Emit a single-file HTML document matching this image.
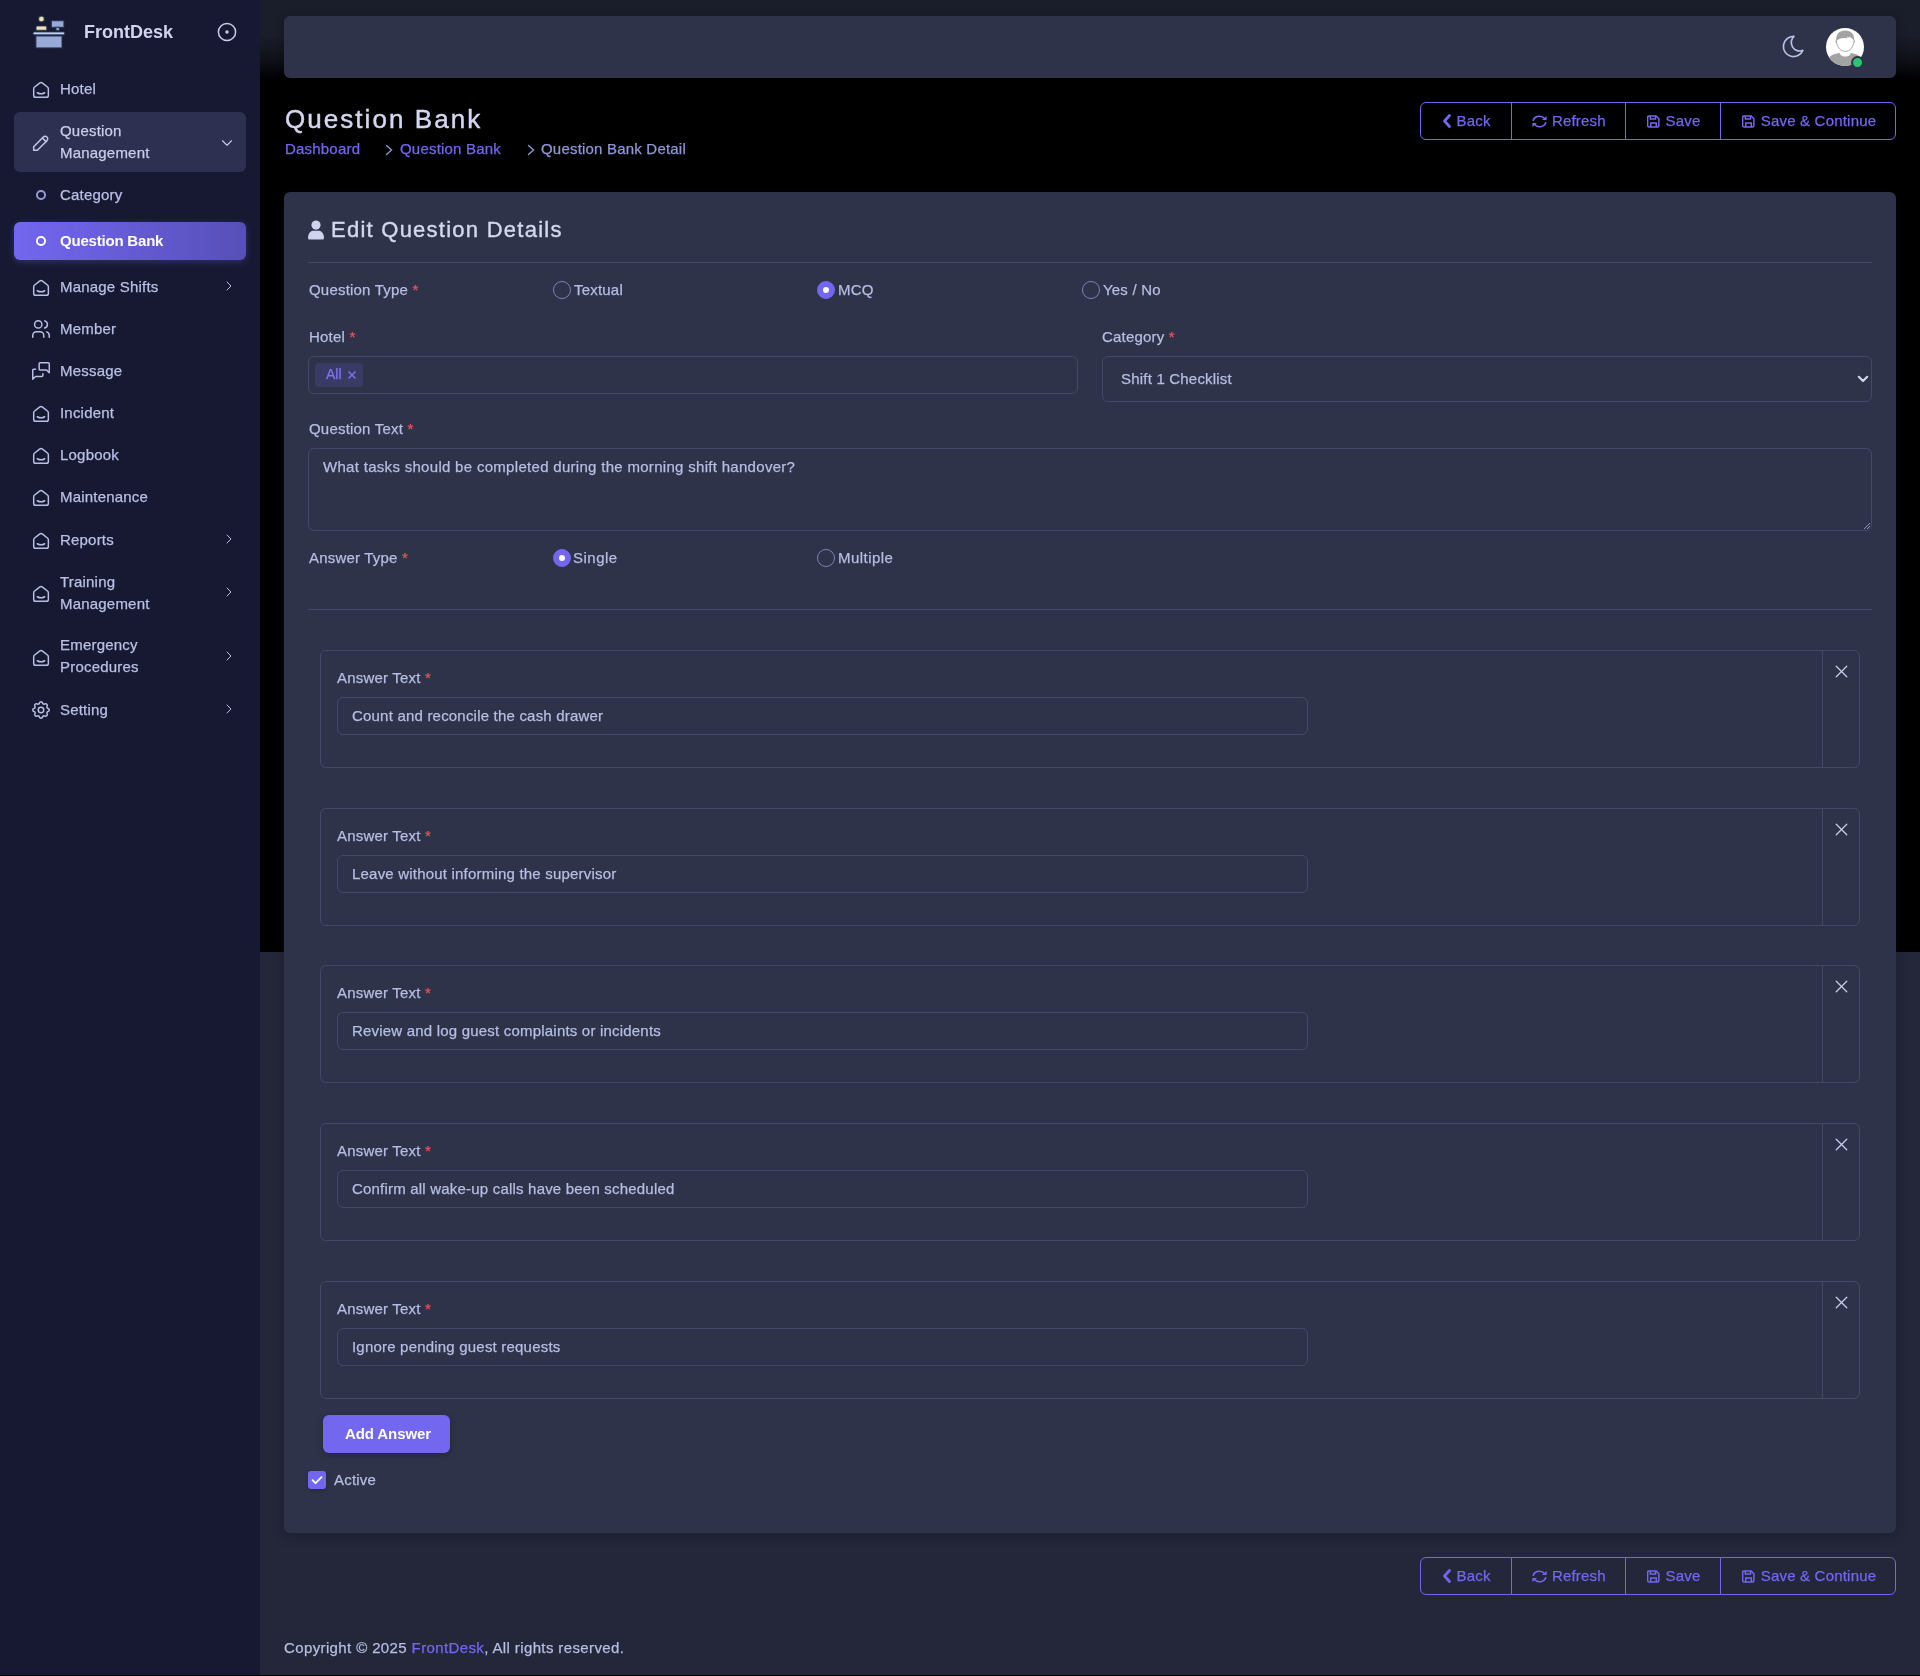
<!DOCTYPE html>
<html><head><meta charset="utf-8">
<style>
*{box-sizing:border-box;margin:0;padding:0}
html,body{width:1920px;height:1676px;overflow:hidden;background:#25293c}
.txt,.lbl,.mi,.ans,.btng,.abs{will-change:transform}
body{position:relative;font-family:"Liberation Sans",sans-serif;font-size:15px;color:#b6bee3;letter-spacing:0.2px;-webkit-text-stroke:0.25px currentColor}
.abs{position:absolute}
svg{display:block}
/* backgrounds */
#blk{left:260px;top:0;width:1660px;height:952px;background:#000}
#low{left:260px;top:952px;width:1660px;height:723px;background:#242739}
#botline{left:0;top:1675px;width:1920px;height:1px;background:#000}
#topgrad{left:260px;top:0;width:1660px;height:80px;background:linear-gradient(180deg,rgba(37,41,60,.7) 44%,rgba(37,41,60,.43) 73%,rgba(37,41,60,0))}
/* sidebar */
#side{left:0;top:0;width:260px;height:1675px;background:#171933}
.mi{position:absolute;left:60px;white-space:nowrap;line-height:22px;color:#b9c0e4}
.ic{position:absolute;left:30px;stroke:#b9c0e4;fill:none;stroke-width:1.6;stroke-linecap:round;stroke-linejoin:round}
.chev{position:absolute;left:222px;stroke:#b9c0e4;fill:none;stroke-width:1.5;stroke-linecap:round;stroke-linejoin:round}
/* navbar */
#nav{left:284px;top:16px;width:1612px;height:62px;background:#2f3349;border-radius:6px;box-shadow:0 2px 10px rgba(0,0,0,.25)}
.btng{position:absolute;left:1420px;width:476px;height:38px;border:1px solid #7367f0;border-radius:6px;color:#7367f0}
.btng .d{position:absolute;top:-1px;height:38px;width:1px;background:#7367f0}
.btng span{position:absolute;top:0;line-height:36px;white-space:nowrap}
.btng svg{position:absolute}
/* card */
#card{left:284px;top:192px;width:1612px;height:1341px;background:#2f3349;border-radius:6px;box-shadow:0 3px 12px rgba(15,20,34,.35)}
.lbl{position:absolute;line-height:20px;white-space:nowrap;color:#b6bee3}
.req{color:#ea5455}
.inp{position:absolute;border:1px solid #434968;border-radius:6px}
.txt{position:absolute;white-space:nowrap;line-height:20px;color:#b6bee3}
.hr{position:absolute;height:1px;background:#434968}
.radio{position:absolute;width:18px;height:18px;border-radius:50%;border:1px solid #7b80b8}
.radio.on{background:#7367f0;border-color:#7367f0}
.radio.on:after{content:"";position:absolute;left:5px;top:5px;width:6px;height:6px;border-radius:50%;background:#fff}
.ans{position:absolute;left:320px;width:1540px;height:118px;border:1px solid #434968;border-radius:6px}
.ans .dv{position:absolute;left:1501px;top:0;width:1px;height:116px;background:#434968}
.ans .box{position:absolute;left:16px;top:46px;width:971px;height:38px;border:1px solid #434968;border-radius:6px}
.ans .l{position:absolute;left:16px;top:17px;line-height:20px;white-space:nowrap}
.ans .v{position:absolute;left:31px;top:55px;line-height:20px;white-space:nowrap}
.ans svg{position:absolute;left:1509.5px;top:10px}
</style></head>
<body>
<div id="blk" class="abs"></div>
<div id="low" class="abs"></div>
<div id="topgrad" class="abs"></div>

<!-- SIDEBAR -->
<div id="side" class="abs">
  <!-- logo -->
  <svg class="abs" style="left:25px;top:10px" width="50" height="45" viewBox="0 0 50 45">
    <g stroke="#22324a" stroke-width="1.2" stroke-opacity=".8">
    <circle cx="16.4" cy="9" r="2.9" fill="#f0e0b4"/>
    <rect x="11" y="16" width="10.8" height="4.4" rx="1.2" fill="#f0e0b4"/>
    <rect x="26.4" y="10.7" width="12.5" height="6.7" fill="#98aad8"/>
    <path d="M30.8 17.3 h3.8 l-0.3 3.2 h-3.2z" fill="#98aad8"/>
    <rect x="8" y="21.9" width="31.7" height="2.9" rx="1" fill="#c3d3fb"/>
    <rect x="10.9" y="26" width="26.1" height="11.9" fill="#98aad8"/>
    </g>
  </svg>
  <div class="abs" style="left:84px;top:20.8px;line-height:22px;font-size:18px;font-weight:bold;color:#d0d4ee;letter-spacing:0;-webkit-text-stroke:0">FrontDesk</div>
  <svg class="abs" style="left:215px;top:20.2px;stroke:#c9cdea;fill:none;stroke-width:1.5" width="24" height="24" viewBox="0 0 24 24"><circle cx="12" cy="12" r="8.6"/><circle cx="12" cy="12" r="1" fill="#c9cdea"/></svg>

  <!-- Hotel -->
  <svg class="ic" style="top:79.3px" width="22" height="22" viewBox="0 0 24 24"><path d="M19 8.71l-5.333 -4.148a2.666 2.666 0 0 0 -3.274 0l-5.334 4.148a2.665 2.665 0 0 0 -1.029 2.105v7.2a2 2 0 0 0 2 2h12a2 2 0 0 0 2 -2v-7.2c0 -.823 -.38 -1.6 -1.03 -2.105"/><path d="M16 15c-2.21 1.333 -5.792 1.333 -8 0"/></svg>
  <div class="mi" style="top:77.8px">Hotel</div>

  <!-- Question Management (open) -->
  <div class="abs" style="left:14px;top:112px;width:232px;height:60px;border-radius:6px;background:#2d3050"></div>
  <svg class="ic" style="top:132.3px;stroke:#c3c9ea" width="22" height="22" viewBox="0 0 24 24"><path d="M4 20h4l10.5 -10.5a2.828 2.828 0 1 0 -4 -4l-10.5 10.5v4"/><path d="M13.5 6.5l4 4"/></svg>
  <div class="mi" style="top:119.6px;color:#c9cdea">Question<br>Management</div>
  <svg class="chev" style="left:218.3px;top:133.7px;stroke:#c3c9ea" width="18" height="18" viewBox="0 0 24 24"><path d="M6 9l6 6l6 -6"/></svg>

  <!-- Category -->
  <div class="abs" style="left:36px;top:190.3px;width:9.5px;height:9.5px;border-radius:50%;border:2px solid #939ad4"></div>
  <div class="mi" style="top:183.5px">Category</div>

  <!-- Question Bank active -->
  <div class="abs" style="left:14px;top:222px;width:232px;height:38px;border-radius:6px;background:linear-gradient(270deg,rgba(115,103,240,.7) 0%,#7367f0 100%);box-shadow:0 2px 6px rgba(115,103,240,.3)"></div>
  <div class="abs" style="left:36px;top:236px;width:9.5px;height:9.5px;border-radius:50%;border:2.2px solid #fff"></div>
  <div class="mi" style="top:229.8px;color:#fff;font-weight:bold;letter-spacing:-0.2px;-webkit-text-stroke:0">Question Bank</div>

  <!-- Manage Shifts -->
  <svg class="ic" style="top:277.0px" width="22" height="22" viewBox="0 0 24 24"><path d="M19 8.71l-5.333 -4.148a2.666 2.666 0 0 0 -3.274 0l-5.334 4.148a2.665 2.665 0 0 0 -1.029 2.105v7.2a2 2 0 0 0 2 2h12a2 2 0 0 0 2 -2v-7.2c0 -.823 -.38 -1.6 -1.03 -2.105"/><path d="M16 15c-2.21 1.333 -5.792 1.333 -8 0"/></svg>
  <div class="mi" style="top:275.6px">Manage Shifts</div>
  <svg class="chev" style="left:221.3px;top:278.0px" width="16" height="16" viewBox="0 0 24 24"><path d="M9 6l6 6l-6 6"/></svg>

  <!-- Member -->
  <svg class="ic" style="top:318.0px" width="22" height="22" viewBox="0 0 24 24"><path d="M9 7m-4 0a4 4 0 1 0 8 0a4 4 0 1 0 -8 0"/><path d="M3 21v-2a4 4 0 0 1 4 -4h4a4 4 0 0 1 4 4v2"/><path d="M16 3.13a4 4 0 0 1 0 7.75"/><path d="M21 21v-2a4 4 0 0 0 -3 -3.85"/></svg>
  <div class="mi" style="top:317.6px">Member</div>

  <!-- Message -->
  <svg class="ic" style="top:360.0px" width="22" height="22" viewBox="0 0 24 24"><path d="M21 14l-3 -3h-7a1 1 0 0 1 -1 -1v-6a1 1 0 0 1 1 -1h9a1 1 0 0 1 1 1v10"/><path d="M14 15v2a1 1 0 0 1 -1 1h-7l-3 3v-10a1 1 0 0 1 1 -1h2"/></svg>
  <div class="mi" style="top:359.6px">Message</div>

  <!-- Incident -->
  <svg class="ic" style="top:403.0px" width="22" height="22" viewBox="0 0 24 24"><path d="M19 8.71l-5.333 -4.148a2.666 2.666 0 0 0 -3.274 0l-5.334 4.148a2.665 2.665 0 0 0 -1.029 2.105v7.2a2 2 0 0 0 2 2h12a2 2 0 0 0 2 -2v-7.2c0 -.823 -.38 -1.6 -1.03 -2.105"/><path d="M16 15c-2.21 1.333 -5.792 1.333 -8 0"/></svg>
  <div class="mi" style="top:401.6px">Incident</div>

  <!-- Logbook -->
  <svg class="ic" style="top:445.0px" width="22" height="22" viewBox="0 0 24 24"><path d="M19 8.71l-5.333 -4.148a2.666 2.666 0 0 0 -3.274 0l-5.334 4.148a2.665 2.665 0 0 0 -1.029 2.105v7.2a2 2 0 0 0 2 2h12a2 2 0 0 0 2 -2v-7.2c0 -.823 -.38 -1.6 -1.03 -2.105"/><path d="M16 15c-2.21 1.333 -5.792 1.333 -8 0"/></svg>
  <div class="mi" style="top:443.6px">Logbook</div>

  <!-- Maintenance -->
  <svg class="ic" style="top:487.0px" width="22" height="22" viewBox="0 0 24 24"><path d="M19 8.71l-5.333 -4.148a2.666 2.666 0 0 0 -3.274 0l-5.334 4.148a2.665 2.665 0 0 0 -1.029 2.105v7.2a2 2 0 0 0 2 2h12a2 2 0 0 0 2 -2v-7.2c0 -.823 -.38 -1.6 -1.03 -2.105"/><path d="M16 15c-2.21 1.333 -5.792 1.333 -8 0"/></svg>
  <div class="mi" style="top:485.6px">Maintenance</div>

  <!-- Reports -->
  <svg class="ic" style="top:530.0px" width="22" height="22" viewBox="0 0 24 24"><path d="M19 8.71l-5.333 -4.148a2.666 2.666 0 0 0 -3.274 0l-5.334 4.148a2.665 2.665 0 0 0 -1.029 2.105v7.2a2 2 0 0 0 2 2h12a2 2 0 0 0 2 -2v-7.2c0 -.823 -.38 -1.6 -1.03 -2.105"/><path d="M16 15c-2.21 1.333 -5.792 1.333 -8 0"/></svg>
  <div class="mi" style="top:528.6px">Reports</div>
  <svg class="chev" style="left:221.3px;top:531.0px" width="16" height="16" viewBox="0 0 24 24"><path d="M9 6l6 6l-6 6"/></svg>

  <!-- Training Management -->
  <svg class="ic" style="top:583.0px" width="22" height="22" viewBox="0 0 24 24"><path d="M19 8.71l-5.333 -4.148a2.666 2.666 0 0 0 -3.274 0l-5.334 4.148a2.665 2.665 0 0 0 -1.029 2.105v7.2a2 2 0 0 0 2 2h12a2 2 0 0 0 2 -2v-7.2c0 -.823 -.38 -1.6 -1.03 -2.105"/><path d="M16 15c-2.21 1.333 -5.792 1.333 -8 0"/></svg>
  <div class="mi" style="top:570.5px">Training<br>Management</div>
  <svg class="chev" style="left:221.3px;top:584.0px" width="16" height="16" viewBox="0 0 24 24"><path d="M9 6l6 6l-6 6"/></svg>

  <!-- Emergency Procedures -->
  <svg class="ic" style="top:647.0px" width="22" height="22" viewBox="0 0 24 24"><path d="M19 8.71l-5.333 -4.148a2.666 2.666 0 0 0 -3.274 0l-5.334 4.148a2.665 2.665 0 0 0 -1.029 2.105v7.2a2 2 0 0 0 2 2h12a2 2 0 0 0 2 -2v-7.2c0 -.823 -.38 -1.6 -1.03 -2.105"/><path d="M16 15c-2.21 1.333 -5.792 1.333 -8 0"/></svg>
  <div class="mi" style="top:634.1px">Emergency<br>Procedures</div>
  <svg class="chev" style="left:221.3px;top:648.0px" width="16" height="16" viewBox="0 0 24 24"><path d="M9 6l6 6l-6 6"/></svg>

  <!-- Setting -->
  <svg class="ic" style="top:699.0px" width="22" height="22" viewBox="0 0 24 24"><path d="M10.325 4.317c.426 -1.756 2.924 -1.756 3.35 0a1.724 1.724 0 0 0 2.573 1.066c1.543 -.94 3.31 .826 2.37 2.37a1.724 1.724 0 0 0 1.065 2.572c1.756 .426 1.756 2.924 0 3.35a1.724 1.724 0 0 0 -1.066 2.573c.94 1.543 -.826 3.31 -2.37 2.37a1.724 1.724 0 0 0 -2.572 1.065c-.426 1.756 -2.924 1.756 -3.35 0a1.724 1.724 0 0 0 -2.573 -1.066c-1.543 .94 -3.31 -.826 -2.37 -2.37a1.724 1.724 0 0 0 -1.065 -2.572c-1.756 -.426 -1.756 -2.924 0 -3.35a1.724 1.724 0 0 0 1.066 -2.573c-.94 -1.543 .826 -3.31 2.37 -2.37c1 .608 2.296 .07 2.572 -1.065z"/><path d="M9 12a3 3 0 1 0 6 0a3 3 0 0 0 -6 0"/></svg>
  <div class="mi" style="top:698.5px">Setting</div>
  <svg class="chev" style="left:221.3px;top:701.0px" width="16" height="16" viewBox="0 0 24 24"><path d="M9 6l6 6l-6 6"/></svg>
</div>

<!-- NAVBAR -->
<div id="nav" class="abs"></div>
<svg class="abs" style="left:1779.7px;top:33.4px;fill:none;stroke:#b9c0e6;stroke-width:1.5;stroke-linecap:round;stroke-linejoin:round" width="27" height="27" viewBox="0 0 24 24"><path d="M12 3c.132 0 .263 0 .393 0a7.5 7.5 0 0 0 7.92 12.446a9 9 0 1 1 -8.313 -12.454z"/></svg>
<svg class="abs" style="left:1826px;top:27.7px" width="38" height="38" viewBox="0 0 38 38">
  <defs><clipPath id="avc"><circle cx="19" cy="19" r="19"/></clipPath></defs>
  <circle cx="19" cy="19" r="19" fill="#fff"/>
  <g clip-path="url(#avc)">
    <path d="M0 40 L0 33 C3 27.2 10 24.5 19 24.5 C28 24.5 35 27.2 38 33 L38 40z" fill="#a3a3a3"/>
    <path d="M13.8 23 h10.8 v3 c-2 3.4 -8.8 3.4 -10.8 0z" fill="#fff"/>
    <path d="M10.3 13 C11 19.2 14.5 23.4 19.2 23.4 C23.9 23.4 27.4 19.2 28.1 13" fill="none" stroke="#a3a3a3" stroke-width="0.9"/>
    <path d="M10.5 12.2 c-1 0.2 -1 2.2 0.2 2.6 M27.9 12.2 c1 0.2 1 2.2 -0.2 2.6" fill="none" stroke="#a3a3a3" stroke-width="0.9"/>
    <path d="M10.2 13.2 C9.6 6.2 13.2 2.6 19.2 2.6 C25.2 2.6 28.8 6.2 28.2 13.2 C27 10.6 25 9 23 8.4 L23.6 10.2 L21.2 8.6 L21.6 10.4 C17.6 9.6 13 10 10.2 13.2z" fill="#a3a3a3"/>
  </g>
</svg>
<div class="abs" style="left:1850.8px;top:55.9px;width:13px;height:13px;border-radius:50%;background:#28c76f;border:2.2px solid #2f3349"></div>

<!-- header -->
<div class="abs" style="left:284.6px;top:104px;line-height:30px;font-size:26px;color:#d4d7ef;letter-spacing:2.05px;-webkit-text-stroke:0.45px #d4d7ef;white-space:nowrap">Question Bank</div>
<div class="abs" style="left:284.6px;top:137.8px;line-height:22px;color:#7367f0;white-space:nowrap">Dashboard</div>
<svg class="abs" style="left:383px;top:143px;fill:none;stroke:#8f96cf;stroke-width:1.4;stroke-linecap:round" width="12" height="14" viewBox="0 0 12 14"><path d="M3.5 2.5l5 4.5l-5 4.5"/></svg>
<div class="abs" style="left:399.7px;top:137.8px;line-height:22px;color:#7367f0;white-space:nowrap">Question Bank</div>
<svg class="abs" style="left:525px;top:143px;fill:none;stroke:#8f96cf;stroke-width:1.4;stroke-linecap:round" width="12" height="14" viewBox="0 0 12 14"><path d="M3.5 2.5l5 4.5l-5 4.5"/></svg>
<div class="abs" style="left:541.3px;top:137.8px;line-height:22px;color:#8f97d8;white-space:nowrap">Question Bank Detail</div>

<!-- CARD -->
<div id="card" class="abs"></div>
<svg class="abs" style="left:307px;top:220px" width="18" height="20" viewBox="0 0 18 20"><circle cx="9" cy="5.1" r="4.6" fill="#cfd3ec"/><path d="M1 18 C1 13.5 3.5 10.8 6.5 10.8 h5 C14.5 10.8 17 13.5 17 18 a1.6 1.6 0 0 1 -1.6 1.6 h-12.8 A1.6 1.6 0 0 1 1 18z" fill="#cfd3ec"/></svg>
<div class="abs" style="left:331.4px;top:216.1px;line-height:28px;font-size:22px;color:#d4d7ef;letter-spacing:1.25px;-webkit-text-stroke:0.4px #d4d7ef;white-space:nowrap">Edit Question Details</div>
<div class="hr" style="left:308px;top:262px;width:1564px"></div>

<div class="lbl" style="left:308.5px;top:279.8px">Question Type <span class="req">*</span></div>
<div class="radio" style="left:553px;top:281px"></div><div class="txt" style="left:573.6px;top:279.8px">Textual</div>
<div class="radio on" style="left:817px;top:281px"></div><div class="txt" style="left:837.8px;top:279.8px">MCQ</div>
<div class="radio" style="left:1082px;top:281px"></div><div class="txt" style="left:1102.5px;top:279.8px">Yes / No</div>

<div class="lbl" style="left:308.5px;top:326.8px">Hotel <span class="req">*</span></div>
<div class="inp" style="left:308px;top:356px;width:770px;height:38px"></div>
<div class="abs" style="left:315px;top:363px;width:48px;height:24px;border-radius:4px;background:#3a3b65"></div>
<div class="abs" style="left:325.7px;top:363.8px;line-height:20px;font-size:14px;color:#7f74f2;letter-spacing:0">All</div>
<svg class="abs" style="left:347px;top:370px;stroke:#7f74f2;stroke-width:1.4" width="10" height="10" viewBox="0 0 10 10"><path d="M1.5 1.5l7 7M8.5 1.5l-7 7"/></svg>

<div class="lbl" style="left:1102px;top:327.3px">Category <span class="req">*</span></div>
<div class="inp" style="left:1102px;top:356px;width:770px;height:46px"></div>
<div class="txt" style="left:1121.3px;top:368.7px">Shift 1 Checklist</div>
<svg class="abs" style="left:1857px;top:373px;fill:none;stroke:#cfd3ec;stroke-width:2.2;stroke-linecap:round;stroke-linejoin:round" width="12" height="12" viewBox="0 0 12 12"><path d="M1.8 3.8l4.2 4.2l4.2 -4.2"/></svg>

<div class="lbl" style="left:308.5px;top:419px">Question Text <span class="req">*</span></div>
<div class="inp" style="left:308px;top:448px;width:1564px;height:83px"></div>
<svg class="abs" style="left:1861px;top:520px;stroke:#8d93b8;stroke-width:1" width="10" height="10" viewBox="0 0 10 10"><path d="M9 3L3 9M9 6L6 9"/></svg>
<div class="txt" style="left:323px;top:456.8px;letter-spacing:0.3px">What tasks should be completed during the morning shift handover?</div>

<div class="lbl" style="left:308.5px;top:547.6px">Answer Type <span class="req">*</span></div>
<div class="radio on" style="left:553px;top:549px"></div><div class="txt" style="left:572.9px;top:547.6px;letter-spacing:0.5px">Single</div>
<div class="radio" style="left:817px;top:549px"></div><div class="txt" style="left:837.6px;top:547.6px;letter-spacing:0.45px">Multiple</div>
<div class="hr" style="left:308px;top:609px;width:1564px"></div>
<div class="ans" style="top:650px"><div class="dv"></div><div class="l">Answer Text <span class="req">*</span></div><div class="box"></div><div class="v">Count and reconcile the cash drawer</div><svg width="21" height="21" viewBox="0 0 24 24" style="fill:none;stroke:#c8cdeb;stroke-width:1.5;stroke-linecap:round"><path d="M18 6l-12 12"/><path d="M6 6l12 12"/></svg></div>
<div class="ans" style="top:808px"><div class="dv"></div><div class="l">Answer Text <span class="req">*</span></div><div class="box"></div><div class="v">Leave without informing the supervisor</div><svg width="21" height="21" viewBox="0 0 24 24" style="fill:none;stroke:#c8cdeb;stroke-width:1.5;stroke-linecap:round"><path d="M18 6l-12 12"/><path d="M6 6l12 12"/></svg></div>
<div class="ans" style="top:965px"><div class="dv"></div><div class="l">Answer Text <span class="req">*</span></div><div class="box"></div><div class="v">Review and log guest complaints or incidents</div><svg width="21" height="21" viewBox="0 0 24 24" style="fill:none;stroke:#c8cdeb;stroke-width:1.5;stroke-linecap:round"><path d="M18 6l-12 12"/><path d="M6 6l12 12"/></svg></div>
<div class="ans" style="top:1123px"><div class="dv"></div><div class="l">Answer Text <span class="req">*</span></div><div class="box"></div><div class="v">Confirm all wake-up calls have been scheduled</div><svg width="21" height="21" viewBox="0 0 24 24" style="fill:none;stroke:#c8cdeb;stroke-width:1.5;stroke-linecap:round"><path d="M18 6l-12 12"/><path d="M6 6l12 12"/></svg></div>
<div class="ans" style="top:1281px"><div class="dv"></div><div class="l">Answer Text <span class="req">*</span></div><div class="box"></div><div class="v">Ignore pending guest requests</div><svg width="21" height="21" viewBox="0 0 24 24" style="fill:none;stroke:#c8cdeb;stroke-width:1.5;stroke-linecap:round"><path d="M18 6l-12 12"/><path d="M6 6l12 12"/></svg></div>
<div class="abs" style="left:323px;top:1415px;width:127px;height:38px;border-radius:6px;background:#7367f0;box-shadow:0 2px 6px rgba(0,0,0,.25)"></div>
<div class="abs" style="left:344.5px;top:1423px;line-height:22px;color:#fff;font-weight:bold;letter-spacing:-0.1px;-webkit-text-stroke:0;white-space:nowrap">Add Answer</div>
<div class="abs" style="left:308px;top:1471px;width:18px;height:18px;border-radius:3px;background:#7367f0;box-shadow:0 2px 4px rgba(0,0,0,.2)"></div>
<svg class="abs" style="left:308px;top:1471px;fill:none;stroke:#fff;stroke-width:1.8;stroke-linecap:round;stroke-linejoin:round" width="18" height="18" viewBox="0 0 18 18"><path d="M4.5 9.2l3 3l6 -6"/></svg>
<div class="txt" style="left:334.2px;top:1470px">Active</div>
<div class="btng" style="top:101.6px">
  <div class="d" style="left:90px"></div><div class="d" style="left:204px"></div><div class="d" style="left:299px"></div>
  <svg style="left:19.5px;top:10.3px;fill:none;stroke:#7367f0;stroke-width:2.8;stroke-linecap:round;stroke-linejoin:round" width="12" height="16" viewBox="0 0 12 16"><path d="M8.5 2.5l-5 5.5l5 5.5"/></svg>
  <span style="left:35.5px">Back</span>
  <svg style="left:110px;top:12.3px" width="17" height="13" viewBox="0 0 17 15" preserveAspectRatio="none"><g fill="none" stroke="#7367f0" stroke-width="1.7" stroke-linecap="round"><path d="M2.3 6.2 A6.3 6.3 0 0 1 13.6 4.2"/><path d="M14.7 8.8 A6.3 6.3 0 0 1 3.4 10.8"/></g><path d="M15.6 1.2 v4.6 h-4.6z" fill="#7367f0"/><path d="M1.4 13.8 v-4.6 h4.6z" fill="#7367f0"/></svg>
  <span style="left:130.9px">Refresh</span>
  <svg style="left:226px;top:12.4px" width="13" height="13" viewBox="0 0 14 14"><g fill="none" stroke="#7367f0" stroke-width="1.6"><path d="M2.3 1 h7.5 l3 3 v7.2 a1.6 1.6 0 0 1 -1.6 1.6 h-8.9 a1.6 1.6 0 0 1 -1.6 -1.6 v-8.6 a1.6 1.6 0 0 1 1.6 -1.6z"/><path d="M3.6 1 v3.2 h5.6 v-3.2"/><path d="M4 12.8 v-4.2 h6 v4.2"/></g></svg>
  <span style="left:244.6px">Save</span>
  <svg style="left:321.2px;top:12.4px" width="13" height="13" viewBox="0 0 14 14"><g fill="none" stroke="#7367f0" stroke-width="1.6"><path d="M2.3 1 h7.5 l3 3 v7.2 a1.6 1.6 0 0 1 -1.6 1.6 h-8.9 a1.6 1.6 0 0 1 -1.6 -1.6 v-8.6 a1.6 1.6 0 0 1 1.6 -1.6z"/><path d="M3.6 1 v3.2 h5.6 v-3.2"/><path d="M4 12.8 v-4.2 h6 v4.2"/></g></svg>
  <span style="left:339.7px">Save &amp; Continue</span>
</div>
<div class="btng" style="top:1557px">
  <div class="d" style="left:90px"></div><div class="d" style="left:204px"></div><div class="d" style="left:299px"></div>
  <svg style="left:19.5px;top:10.3px;fill:none;stroke:#7367f0;stroke-width:2.8;stroke-linecap:round;stroke-linejoin:round" width="12" height="16" viewBox="0 0 12 16"><path d="M8.5 2.5l-5 5.5l5 5.5"/></svg>
  <span style="left:35.5px">Back</span>
  <svg style="left:110px;top:12.3px" width="17" height="13" viewBox="0 0 17 15" preserveAspectRatio="none"><g fill="none" stroke="#7367f0" stroke-width="1.7" stroke-linecap="round"><path d="M2.3 6.2 A6.3 6.3 0 0 1 13.6 4.2"/><path d="M14.7 8.8 A6.3 6.3 0 0 1 3.4 10.8"/></g><path d="M15.6 1.2 v4.6 h-4.6z" fill="#7367f0"/><path d="M1.4 13.8 v-4.6 h4.6z" fill="#7367f0"/></svg>
  <span style="left:130.9px">Refresh</span>
  <svg style="left:226px;top:12.4px" width="13" height="13" viewBox="0 0 14 14"><g fill="none" stroke="#7367f0" stroke-width="1.6"><path d="M2.3 1 h7.5 l3 3 v7.2 a1.6 1.6 0 0 1 -1.6 1.6 h-8.9 a1.6 1.6 0 0 1 -1.6 -1.6 v-8.6 a1.6 1.6 0 0 1 1.6 -1.6z"/><path d="M3.6 1 v3.2 h5.6 v-3.2"/><path d="M4 12.8 v-4.2 h6 v4.2"/></g></svg>
  <span style="left:244.6px">Save</span>
  <svg style="left:321.2px;top:12.4px" width="13" height="13" viewBox="0 0 14 14"><g fill="none" stroke="#7367f0" stroke-width="1.6"><path d="M2.3 1 h7.5 l3 3 v7.2 a1.6 1.6 0 0 1 -1.6 1.6 h-8.9 a1.6 1.6 0 0 1 -1.6 -1.6 v-8.6 a1.6 1.6 0 0 1 1.6 -1.6z"/><path d="M3.6 1 v3.2 h5.6 v-3.2"/><path d="M4 12.8 v-4.2 h6 v4.2"/></g></svg>
  <span style="left:339.7px">Save &amp; Continue</span>
</div>
<div class="abs" style="left:284.2px;top:1636.8px;line-height:22px;white-space:nowrap;color:#b6bee3;letter-spacing:0.38px">Copyright © 2025 <span style="color:#7367f0">FrontDesk</span>, All rights reserved.</div>

<div id="botline" class="abs"></div>
</body></html>
